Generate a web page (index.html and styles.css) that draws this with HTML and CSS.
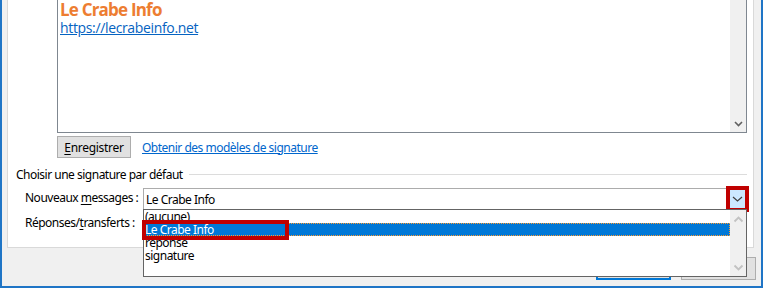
FILE: index.html
```html
<!DOCTYPE html>
<html lang="fr">
<head>
    <meta charset="UTF-8">
    <title>Signatures et thème</title>
    <link rel="stylesheet" href="styles.css">
</head>
<body>
    <div class="window">
        <div class="panel">
            <div class="editor">
                <div class="editor-text">
                    <p class="sig-name">Le Crabe Info</p>
                    <a href="#" class="sig-link">https://lecrabeinfo.net</a>
                </div>
                <div class="vscroll">
                    <svg class="arrow down" width="9" height="6" viewBox="0 0 9 6"><path d="M1 1 L4.5 4.5 L8 1" fill="none" stroke="currentColor" stroke-width="1.6"/></svg>
                </div>
            </div>

            <div class="editor-actions">
                <button class="btn"><u>E</u>nregistrer</button>
                <a href="#" class="link">Obtenir des modèles de signature</a>
            </div>

            <div class="group">
                <div class="group-title"><span>Choisir une signature par défaut</span></div>

                <div class="field-row">
                    <label>Nouveaux <u>m</u>essages :</label>
                    <div class="combo">
                        <span class="combo-value">Le Crabe Info</span>
                        <span class="combo-btn">
                            <svg width="11" height="6" viewBox="0 0 11 6"><path d="M1 1 L5.5 5 L10 1" fill="none" stroke="currentColor" stroke-width="1.2"/></svg>
                        </span>
                        <span class="mark mark-btn"></span>

                        <div class="dropdown">
                            <ul class="options">
                                <li>(aucune)</li>
                                <li class="selected">Le Crabe Info</li>
                                <li>réponse</li>
                                <li>signature</li>
                            </ul>
                            <div class="vscroll light">
                                <svg class="arrow" width="11" height="7" viewBox="0 0 11 7"><path d="M1.5 5.5 L5.5 1.5 L9.5 5.5" fill="none" stroke="currentColor" stroke-width="1.8"/></svg>
                                <svg class="arrow" width="11" height="7" viewBox="0 0 11 7"><path d="M1.5 1.5 L5.5 5.5 L9.5 1.5" fill="none" stroke="currentColor" stroke-width="1.8"/></svg>
                            </div>
                            <span class="mark mark-item"></span>
                        </div>
                    </div>
                </div>

                <div class="field-row">
                    <label>Réponses/<u>t</u>ransferts :</label>
                    <div class="combo">
                        <span class="combo-value">(aucune)</span>
                    </div>
                </div>
            </div>
        </div>

        <div class="dialog-buttons">
            <button class="btn default">OK</button>
            <button class="btn">Annuler</button>
        </div>
    </div>
</body>
</html>
```

FILE: styles.css
```css
/* General Styles */
* {
    margin: 0;
    padding: 0;
    box-sizing: border-box;
}

body {
    width: 763px;
    height: 288px;
    overflow: hidden;
    font-family: "Noto Sans", "Open Sans", sans-serif;
    font-size: 12px;
    letter-spacing: -0.5px;
    color: #000;
    background-color: #fff;
}

u {
    text-decoration-thickness: 1px;
    text-underline-offset: 2px;
}

/* Window frame */
.window {
    height: 288px;
    display: flex;
    flex-direction: column;
    background-color: #f0f0f0;
    border-left: 2px solid #1f75c6;
    border-right: 2px solid #1f75c6;
    border-bottom: 2px solid #1f75c6;
}

.panel {
    height: 248px;
    margin: 0 7px 0 5px;
    padding-left: 49px;
    background-color: #fff;
    border: 1px solid #d9d9d9;
    border-top: none;
}

/* Signature editor */
.editor {
    width: 690px;
    height: 133px;
    display: flex;
    border: 1px solid #7f8790;
    border-top: none;
}

.editor-text {
    flex: 1;
    padding: 0 0 0 2px;
}

.sig-name {
    font-family: "Open Sans", sans-serif;
    font-weight: bold;
    font-size: 17px;
    line-height: 20px;
    color: #ed7d31;
    letter-spacing: -0.8px;
}

.sig-link {
    display: block;
    font-family: "Open Sans", sans-serif;
    font-size: 14px;
    line-height: 15px;
    color: #0563c1;
    letter-spacing: -0.35px;
}

.vscroll {
    width: 16px;
    display: flex;
    flex-direction: column;
    justify-content: flex-end;
    align-items: center;
    padding-bottom: 5px;
    background-color: #f0f0f0;
    color: #606060;
}

.vscroll.light {
    justify-content: space-between;
    padding: 6px 0 5px;
    color: #c2c2c2;
}

/* Buttons */
.btn {
    height: 22px;
    width: 74px;
    font-family: inherit;
    font-size: 12px;
    letter-spacing: -0.3px;
    color: #000;
    background-color: #e1e1e1;
    border: 1px solid #adadad;
}

.btn.default {
    border: 2px solid #0078d7;
}

.editor-actions {
    display: flex;
    align-items: center;
    gap: 11px;
    margin-top: 3px;
}

.link {
    color: #0066cc;
    text-decoration: underline;
}

/* Default signature group */
.group {
    margin-left: -41px;
    padding-top: 8px;
}

.group-title {
    display: flex;
    align-items: center;
    height: 16px;
    margin-right: 6px;
}

.group-title::after {
    content: "";
    flex: 1;
    height: 1px;
    margin-left: 6px;
    background-color: #dcdcdc;
}

.field-row {
    display: flex;
    align-items: center;
    margin-top: 6px;
    padding-left: 9px;
}

.field-row + .field-row {
    margin-top: 3px;
}

.field-row label {
    flex: none;
    width: 118px;
    white-space: nowrap;
    padding-bottom: 4px;
}

.combo {
    position: relative;
    width: 604px;
    height: 22px;
    display: flex;
    align-items: center;
    padding-left: 2px;
    border: 1px solid #acacac;
    background-color: #fff;
}

.combo-value {
    flex: 1;
}

.combo-btn {
    width: 15px;
    height: 18px;
    margin-right: 1px;
    display: flex;
    align-items: center;
    justify-content: center;
    background-color: #cce8ff;
    color: #404040;
}

/* Red highlight frames */
.mark {
    position: absolute;
    border: 4px solid #c00000;
}

.mark-btn {
    right: -3px;
    top: -3px;
    width: 23px;
    height: 26px;
}

.mark-item {
    left: -2px;
    top: 10px;
    width: 147px;
    height: 20px;
}

/* Open list */
.dropdown {
    position: absolute;
    left: -1px;
    top: 20px;
    width: 604px;
    height: 68px;
    display: flex;
    background-color: #fff;
    border: 1px solid #646464;
    z-index: 2;
}

.options {
    flex: 1;
    list-style: none;
}

.options li {
    height: 13px;
    line-height: 13px;
    padding-left: 1px;
}

.options li.selected {
    color: #fff;
    background-color: #0078d7;
    outline: 1px dotted #ff9a2e;
    outline-offset: -1px;
}

/* Dialog buttons */
.dialog-buttons {
    display: flex;
    justify-content: flex-end;
    gap: 10px;
    margin: 9px 5px 0 0;
}

.dialog-buttons .btn {
    width: 75px;
    height: 23px;
}
```
